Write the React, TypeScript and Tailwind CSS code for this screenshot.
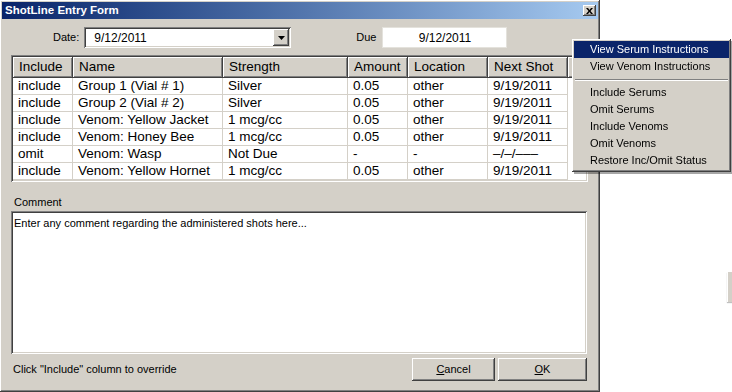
import React from "react";

interface ShotRow {
  include: string;
  name: string;
  strength: string;
  amount: string;
  location: string;
  next: string;
}

const rows: ShotRow[] = [
  { include: "include", name: "Group 1 (Vial # 1)", strength: "Silver", amount: "0.05", location: "other", next: "9/19/2011" },
  { include: "include", name: "Group 2 (Vial # 2)", strength: "Silver", amount: "0.05", location: "other", next: "9/19/2011" },
  { include: "include", name: "Venom: Yellow Jacket", strength: "1 mcg/cc", amount: "0.05", location: "other", next: "9/19/2011" },
  { include: "include", name: "Venom: Honey Bee", strength: "1 mcg/cc", amount: "0.05", location: "other", next: "9/19/2011" },
  { include: "omit", name: "Venom: Wasp", strength: "Not Due", amount: "-", location: "-", next: "–/–/–––" },
  { include: "include", name: "Venom: Yellow Hornet", strength: "1 mcg/cc", amount: "0.05", location: "other", next: "9/19/2011" },
];

const headers = [
  { label: "Include", w: "w-[60px]" },
  { label: "Name", w: "w-[150px]" },
  { label: "Strength", w: "w-[125px]" },
  { label: "Amount", w: "w-[60px]" },
  { label: "Location", w: "w-[80px]" },
  { label: "Next Shot", w: "w-[80px]" },
];

const menuItems = [
  "View Serum Instructions",
  "View Venom Instructions",
  "-",
  "Include Serums",
  "Omit Serums",
  "Include Venoms",
  "Omit Venoms",
  "Restore Inc/Omit Status",
];

const raised =
  "shadow-[inset_-1px_-1px_#404040,inset_1px_1px_#ffffff,inset_-2px_-2px_#808080,inset_2px_2px_#d4d0c8]";
const sunken =
  "shadow-[inset_1px_1px_#808080,inset_-1px_-1px_#ffffff,inset_2px_2px_#404040,inset_-2px_-2px_#d4d0c8]";

function Cell({ w, children }: { w: string; children: React.ReactNode }) {
  return (
    <div
      className={`${w} h-full shrink-0 border-r border-b border-[#d4d0c8] pl-[5px] pt-[1px] flex items-center whitespace-nowrap overflow-hidden`}
    >
      {children}
    </div>
  );
}

export default function App() {
  return (
    <div className="relative w-[732px] h-[392px] bg-white overflow-hidden font-['Liberation_Sans',Arial,sans-serif] text-black">
      {/* dialog window */}
      <div
        className={`w-[600px] h-[392px] bg-[#d4d0c8] p-[2px] flex flex-col ${raised}`}
      >
        <div className="h-[17px] shrink-0 bg-linear-to-r from-[#0a246a] to-[#a6caf0] flex items-center pl-[3px] pr-[2px]">
          <span className="text-[11.5px] font-bold text-white leading-none">
            ShotLine Entry Form
          </span>
          <div
            className={`ml-auto w-[13px] h-[11px] bg-[#d4d0c8] flex items-center justify-center ${raised}`}
          >
            <svg width="7" height="6" viewBox="0 0 7 6">
              <path d="M0 0h2l1.5 2L5 0h2L4.5 3 7 6H5L3.5 4 2 6H0l2.5-3z" fill="#000" />
            </svg>
          </div>
        </div>

        {/* date row */}
        <div className="mt-[8px] h-[21px] flex items-center text-[11px]">
          <span className="ml-[51px]">Date:</span>
          <div
            className={`ml-[5px] w-[207px] h-[21px] bg-white flex items-center ${sunken}`}
          >
            <span className="pl-[10px] text-[12px]">9/12/2011</span>
            <div
              className={`ml-auto mr-[2px] w-[16px] h-[17px] bg-[#d4d0c8] flex items-center justify-center ${raised}`}
            >
              <svg width="7" height="4" viewBox="0 0 7 4">
                <path d="M0 0h7L3.5 4z" fill="#000" />
              </svg>
            </div>
          </div>
          <span className="ml-[65px]">Due</span>
          <div className="ml-[6px] w-[125px] h-[21px] bg-white border border-[#e4e2dc] flex items-center justify-center text-[12px]">
            9/12/2011
          </div>
        </div>

        {/* list view */}
        <div className={`mt-[7px] ml-[9px] w-[577px] h-[127px] bg-white p-[2px] ${sunken}`}>
          <div className="flex h-[21px] text-[13.5px]">
            {headers.map((h) => (
              <div
                key={h.label}
                className={`${h.w} h-full shrink-0 bg-[#d4d0c8] pl-[6px] flex items-center shadow-[inset_-1px_-1px_#404040,inset_1px_1px_#ffffff,inset_-2px_-2px_#808080]`}
              >
                {h.label}
              </div>
            ))}
            <div className="flex-1 h-full bg-[#d4d0c8] shadow-[inset_-1px_-1px_#404040,inset_1px_1px_#ffffff,inset_-2px_-2px_#808080]" />
          </div>
          {rows.map((r, i) => (
            <div key={i} className="flex h-[17px] text-[13.5px]">
              <Cell w="w-[60px]">{r.include}</Cell>
              <Cell w="w-[150px]">{r.name}</Cell>
              <Cell w="w-[125px]">{r.strength}</Cell>
              <Cell w="w-[60px]">{r.amount}</Cell>
              <Cell w="w-[80px]">{r.location}</Cell>
              <Cell w="w-[80px]">{r.next}</Cell>
              <div className="flex-1 h-full" />
            </div>
          ))}
        </div>

        {/* comment */}
        <div className="mt-[14px] ml-[12px] text-[11px] leading-[13px]">Comment</div>
        <div
          className={`mt-[2px] ml-[9px] w-[576px] h-[143px] bg-white px-[3px] pt-[4px] text-[11px] ${sunken}`}
        >
          Enter any comment regarding the administered shots here...
        </div>

        {/* footer */}
        <div className="mt-[4px] ml-[9px] w-[576px] h-[23px] flex items-center">
          <span className="pl-[2px] text-[11px]">
            Click "Include" column to override
          </span>
          <button
            className={`ml-auto w-[83px] h-[23px] bg-[#d4d0c8] text-[11px] ${raised}`}
          >
            <span className="underline">C</span>ancel
          </button>
          <button
            className={`ml-[3px] w-[89px] h-[23px] bg-[#d4d0c8] text-[11px] ${raised}`}
          >
            <span className="underline">O</span>K
          </button>
        </div>
      </div>

      {/* context menu */}
      <div
        className={`absolute left-[572px] top-[39px] w-[159px] bg-[#d4d0c8] p-[2px] pb-[3px] text-[11px] ${raised} drop-shadow-[2px_2px_0_rgba(0,0,0,0.35)]`}
      >
        {menuItems.map((m, i) =>
          m === "-" ? (
            <div key={i} className="h-[9px] flex items-center px-[1px]">
              <div className="w-full h-[2px] border-t border-[#808080] border-b border-b-white" />
            </div>
          ) : (
            <div
              key={i}
              className={`h-[17px] flex items-center pl-[16px] whitespace-nowrap ${
                i === 0 ? "bg-[#0a246a] text-white" : ""
              }`}
            >
              {m}
            </div>
          ),
        )}
      </div>

      {/* partial control at right edge */}
      <div className="absolute left-[727px] top-[272px] w-[6px] h-[30px] bg-[#d4d0c8] shadow-[inset_1px_0_#ffffff,0_1px_1px_#c0c0c0]" />
    </div>
  );
}
